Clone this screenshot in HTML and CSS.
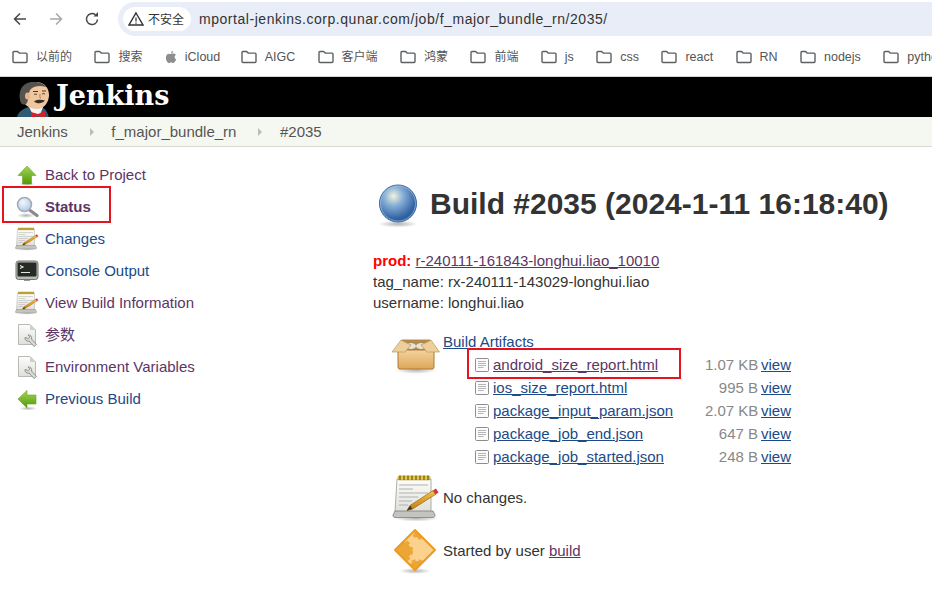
FILE: index.html
```html
<!DOCTYPE html>
<html lang="en">
<head>
  <meta charset="UTF-8">
  <title>f_major_bundle_rn #2035 - Jenkins</title>
  <link rel="stylesheet" href="styles.css">
</head>
<body>
  <!-- shared gradients and icons -->
  <svg class="sprites" aria-hidden="true">
    <defs>
      <linearGradient id="gGreen" x1="0" y1="0" x2="0" y2="1"><stop offset="0" stop-color="#a6d45a"/><stop offset="1" stop-color="#4e9a06"/></linearGradient>
      <linearGradient id="gPaper" x1="0" y1="0" x2="0" y2="1"><stop offset="0" stop-color="#fdfdfb"/><stop offset="1" stop-color="#dedeDA"/></linearGradient>
      <linearGradient id="gBox" x1="0" y1="0" x2="0" y2="1"><stop offset="0" stop-color="#f3d39c"/><stop offset="1" stop-color="#dca75a"/></linearGradient>
      <linearGradient id="gPencil" x1="0" y1="0" x2="0" y2="1"><stop offset="0" stop-color="#f2c14e"/><stop offset="1" stop-color="#c17d11"/></linearGradient>
      <radialGradient id="gBall" cx="0.38" cy="0.3" r="0.75"><stop offset="0" stop-color="#f3f3dc"/><stop offset="0.35" stop-color="#86aed6"/><stop offset="0.8" stop-color="#3465a4"/><stop offset="1" stop-color="#2a5590"/></radialGradient>
      <radialGradient id="gLens" cx="0.4" cy="0.35" r="0.7"><stop offset="0" stop-color="#f4f8fd"/><stop offset="1" stop-color="#a9c6e8"/></radialGradient>
      <radialGradient id="gShadow"><stop offset="0" stop-color="#000" stop-opacity=".3"/><stop offset="1" stop-color="#000" stop-opacity="0"/></radialGradient>
      <clipPath id="cDiamond"><path d="M23 3 43 23 23 43 3 23Z"/></clipPath>

      <symbol id="iFolder" viewBox="0 0 16 16"><path d="M1 3.500a1 1 0 0 1 1-1h3.600l1.600 1.600h6.800a1 1 0 0 1 1 1v7.400a1 1 0 0 1-1 1H2a1 1 0 0 1-1-1z" fill="none" stroke="#5c5f62" stroke-width="1.400"/></symbol>

      <symbol id="iUp" viewBox="0 0 24 24">
        <ellipse cx="12" cy="21" rx="8" ry="2" fill="url(#gShadow)"/>
        <path d="M12 3 21 12.500H16.500V21H7.500V12.500H3Z" fill="url(#gGreen)" stroke="#6aa51f" stroke-width=".6"/>
      </symbol>
      <symbol id="iLeft" viewBox="0 0 24 24">
        <ellipse cx="13" cy="21.500" rx="9" ry="2" fill="url(#gShadow)"/>
        <path d="M3 12 12 3.500V8H21V17H12V21Z" fill="url(#gGreen)" stroke="#6aa51f" stroke-width=".6"/>
      </symbol>
      <symbol id="iSearch" viewBox="0 0 24 24">
        <ellipse cx="11" cy="20.500" rx="9" ry="2.500" fill="url(#gShadow)"/>
        <path d="M14.500 15 22 20.500" stroke="#8a8a8a" stroke-width="3.200" stroke-linecap="round"/>
        <circle cx="9.500" cy="9.500" r="7" fill="url(#gLens)" stroke="#a5a9ad" stroke-width="1.500"/>
      </symbol>
      <symbol id="iNote" viewBox="0 0 48 48">
        <ellipse cx="24" cy="44.500" rx="22" ry="3" fill="url(#gShadow)"/>
        <path d="M5 5H39V38H3Z" fill="url(#gPaper)" stroke="#999995" stroke-width=".8"/>
        <path d="M3 37H41L43 41a2 2 0 0 1-2 2.500H3a2 2 0 0 1-2-2.500Z" fill="#c4c4bf" stroke="#7d7d7a" stroke-width=".8"/>
        <rect x="6" y="2" width="32" height="4" rx="1" fill="#e9c84a" stroke="#a08a20" stroke-width=".5"/>
        <path d="M8 1.500v4.500M12 1.500v4.500M16 1.500v4.500M20 1.500v4.500M24 1.500v4.500M28 1.500v4.500M32 1.500v4.500M36 1.500v4.500" stroke="#6a5a10" stroke-width="1.200"/>
        <path d="M7 11H36M7 15H21M7 19H36M7 23H26M7 27H20M7 31H16" stroke="#b0b0ac" stroke-width="1"/>
        <path d="M15 36.500 18 31.500 41 16.500 43.500 20.500 20.500 35Z" fill="url(#gPencil)" stroke="#8f5902" stroke-width=".6"/>
        <path d="M15 36.500 18 31.500 20.500 35Z" fill="#4a3a22"/>
        <path d="M41 16.500 44 14.500 46.500 18.500 43.500 20.500Z" fill="#d4323c"/>
      </symbol>
      <symbol id="iTerm" viewBox="0 0 24 24">
        <rect x="1" y="2" width="22" height="18.500" rx="2.500" fill="#b8bab5" stroke="#72756f"/>
        <rect x="2.500" y="3.500" width="19" height="14" rx="1" fill="#252a25"/>
        <path d="M5 6.500 8 8 5 9.500M6 13.500H15" stroke="#e6e8e2" stroke-width="1.200" fill="none"/>
        <rect x="9" y="21" width="6" height="1" fill="#999"/>
      </symbol>
      <symbol id="iDoc" viewBox="0 0 24 24">
        <path d="M3.500 1.500H15L20.500 7V21.500H3.500Z" fill="url(#gPaper)" stroke="#b9b9b5"/>
        <path d="M15 1.500V7H20.500Z" fill="#cfcfcb"/>
        <path d="M10 14.500a3 3 0 0 0 4 3.500l5 5.500 2.500-2-5-5.500a3 3 0 0 0-3.500-4l1.800 2-1.500 1.500z" fill="#d8d8d5" stroke="#8b8d88" stroke-width=".9"/>
      </symbol>
      <symbol id="iBall" viewBox="0 0 48 48">
        <ellipse cx="24" cy="44" rx="20" ry="3.500" fill="url(#gShadow)"/>
        <circle cx="24" cy="23.500" r="18.500" fill="url(#gBall)" stroke="#3465a4"/>
        <circle cx="24" cy="23.500" r="17.500" fill="none" stroke="#a9c4e4" stroke-opacity=".8" stroke-width=".8"/>
      </symbol>
      <symbol id="iBox" viewBox="0 0 48 48">
        <ellipse cx="24" cy="38" rx="21" ry="4" fill="url(#gShadow)"/>
        <path d="M9 8H39L36 19H12Z" fill="#b08a52"/>
        <ellipse cx="19" cy="14" rx="5" ry="3" fill="#e4e2da"/>
        <ellipse cx="29" cy="14" rx="5" ry="3" fill="#e4e2da"/>
        <path d="M6 18H42V35a2 2 0 0 1-2 2H8a2 2 0 0 1-2-2Z" fill="url(#gBox)" stroke="#ac7a32"/>
        <path d="M9 8 0 20H13L19 13Z" fill="#edcf9b" stroke="#b98a43" stroke-width=".6"/>
        <path d="M39 8 47.500 20H35L29 13Z" fill="#edcf9b" stroke="#b98a43" stroke-width=".6"/>
        <path d="M10 8H38" stroke="#b98a43"/>
      </symbol>
      <symbol id="iFile" viewBox="0 0 16 16">
        <rect x="1.500" y="1.500" width="13" height="13" rx="1" fill="#fbfbfb" stroke="#8d8d8d"/>
        <path d="M4 4.500H12M4 6.500H12M4 8.500H12M4 10.500H9.500" stroke="#b5b5b5"/>
      </symbol>
      <symbol id="iCause" viewBox="0 0 48 48">
        <ellipse cx="23" cy="44" rx="16" ry="3" fill="url(#gShadow)"/>
        <path d="M23 3 43 23 23 43 3 23Z" fill="#fad18d"/>
        <g clip-path="url(#cDiamond)" fill="#eca636" stroke="#eca636">
          <circle cx="9" cy="24" r="10" stroke-width="4" stroke-dasharray="3.500 3"/>
          <circle cx="25" cy="42" r="8" stroke-width="4" stroke-dasharray="3.500 3"/>
          <circle cx="27" cy="6" r="5" stroke-width="3" stroke-dasharray="3 2.500"/>
        </g>
        <path d="M23 3 43 23 23 43 3 23Z" fill="none" stroke="#ec9a22" stroke-width="2" stroke-linejoin="round"/>
      </symbol>
    </defs>
  </svg>

  <div class="toolbar">
    <svg class="nav-icon" viewBox="0 0 16 16"><path d="M14 8H2.500M8 2.500 2.500 8 8 13.500" fill="none" stroke="#474747" stroke-width="1.500"/></svg>
    <svg class="nav-icon" viewBox="0 0 16 16"><path d="M2 8H13.500M8 2.500 13.500 8 8 13.500" fill="none" stroke="#a8a8a8" stroke-width="1.500"/></svg>
    <svg class="nav-icon" viewBox="0 0 16 16"><path d="M13.500 8.500A5.500 5.500 0 1 1 11.500 3.800" fill="none" stroke="#474747" stroke-width="1.500"/><path d="M9.500 5.500H14V1Z" fill="#474747"/></svg>
    <div class="omnibox">
      <span class="chip">
        <svg class="warn" viewBox="0 0 16 16"><path d="M8 2 15 14H1Z" fill="none" stroke="#333" stroke-width="1.400"/><path d="M8 6.500V10.500M8 11.500V12.800" stroke="#333" stroke-width="1.200"/></svg>
        不安全
      </span>
      <span class="url">mportal-jenkins.corp.qunar.com/job/f_major_bundle_rn/2035/</span>
    </div>
  </div>

  <div class="bookmarks">
    <span class="bm cjk"><svg class="bm-icon"><use href="#iFolder"/></svg>以前的</span>
    <span class="bm cjk"><svg class="bm-icon"><use href="#iFolder"/></svg>搜索</span>
    <span class="bm bm-apple"><svg class="apple" viewBox="0 0 14 16"><path d="M9.500 1C9.600 2.500 8.400 3.800 7 3.800 6.900 2.400 8.200 1.100 9.500 1ZM7 4.600C7.800 4.600 8.600 4 9.800 4 11 4 12 4.600 12.600 5.600 10.600 6.800 10.900 9.800 13 10.700 12.400 12.400 11 15 9.600 15 8.700 15 8.200 14.400 7.100 14.400 6 14.400 5.400 15 4.600 15 3 15 1 11.600 1 8.800 1 6 2.800 4.100 4.600 4.100 5.600 4.100 6.300 4.600 7 4.600Z" fill="#8e8e8e"/></svg>iCloud</span>
    <span class="bm"><svg class="bm-icon"><use href="#iFolder"/></svg>AIGC</span>
    <span class="bm cjk"><svg class="bm-icon"><use href="#iFolder"/></svg>客户端</span>
    <span class="bm cjk"><svg class="bm-icon"><use href="#iFolder"/></svg>鸿蒙</span>
    <span class="bm cjk"><svg class="bm-icon"><use href="#iFolder"/></svg>前端</span>
    <span class="bm"><svg class="bm-icon"><use href="#iFolder"/></svg>js</span>
    <span class="bm"><svg class="bm-icon"><use href="#iFolder"/></svg>css</span>
    <span class="bm"><svg class="bm-icon"><use href="#iFolder"/></svg>react</span>
    <span class="bm"><svg class="bm-icon"><use href="#iFolder"/></svg>RN</span>
    <span class="bm"><svg class="bm-icon"><use href="#iFolder"/></svg>nodejs</span>
    <span class="bm"><svg class="bm-icon"><use href="#iFolder"/></svg>python</span>
  </div>

  <header class="jenkins-head">
    <svg class="butler" viewBox="0 0 36 38">
      <path d="M1 38C2 31 8 29 12 27H26C30 29 32 33 33 38Z" fill="#2f5a75"/>
      <path d="M13 27H27L24 35H17Z" fill="#f4f4f4"/>
      <path d="M15 32 22 34 29 31V38L22 36 15 38Z" fill="#d8202a"/>
      <path d="M6 16C6 7 12 2 20 2 28 2 33 8 33 15 33 22 28 29 21 29 13 29 6 24 6 16Z" fill="#efc6a0"/>
      <path d="M5 23C1 12 6 1.500 18 2 24 2 28 4 30 7 24 5 17 6 14 10 12 14 13 18 11 23 9 25 7 25 5 23Z" fill="#55534e"/>
      <ellipse cx="11.500" cy="16" rx="2.500" ry="3.500" fill="#e6b48c"/>
      <path d="M17 11.500H22M26 11H30M18 14.500C19 14 20 14 21 14.500M26 14C27 13.500 28 13.500 29 14" stroke="#3b2b20" fill="none" stroke-width=".9"/>
      <path d="M24 14C24 17 23.500 18 25 18.500" stroke="#b27f58" fill="none"/>
      <path d="M18 21.500C20 19.500 25 19.500 29 20.500 26 24 21 24 18 21.500Z" fill="#3b2b20"/>
    </svg>
    <span class="wordmark">Jenkins</span>
  </header>

  <nav class="crumbs">
    <span>Jenkins</span><i class="sep"></i>
    <span>f_major_bundle_rn</span><i class="sep"></i>
    <span>#2035</span>
  </nav>

  <div class="page">
    <aside class="side">
      <a class="task visited"><svg class="ic24"><use href="#iUp"/></svg>Back to Project</a>
      <a class="task visited current"><svg class="ic24"><use href="#iSearch"/></svg>Status</a>
      <a class="task"><svg class="ic24"><use href="#iNote"/></svg>Changes</a>
      <a class="task"><svg class="ic24"><use href="#iTerm"/></svg>Console Output</a>
      <a class="task visited"><svg class="ic24"><use href="#iNote"/></svg>View Build Information</a>
      <a class="task visited"><svg class="ic24"><use href="#iDoc"/></svg>参数</a>
      <a class="task visited"><svg class="ic24"><use href="#iDoc"/></svg>Environment Variables</a>
      <a class="task"><svg class="ic24"><use href="#iLeft"/></svg>Previous Build</a>
    </aside>

    <main class="main">
      <h1 class="title"><svg class="ic48"><use href="#iBall"/></svg>Build #2035 (2024-1-11 16:18:40)</h1>

      <div class="desc">
        <div><b class="prod">prod:</b> <a class="link visited">r-240111-161843-longhui.liao_10010</a></div>
        <div>tag_name: rx-240111-143029-longhui.liao</div>
        <div>username: longhui.liao</div>
      </div>

      <section class="artifacts">
        <svg class="ic48"><use href="#iBox"/></svg>
        <div class="artifacts-body">
          <a class="link artifacts-title">Build Artifacts</a>
          <div class="files">
            <div class="file hl"><svg class="ic16"><use href="#iFile"/></svg><a class="link visited">android_size_report.html</a></div><span class="size">1.07 KB</span><a class="link">view</a>
            <div class="file"><svg class="ic16"><use href="#iFile"/></svg><a class="link">ios_size_report.html</a></div><span class="size">995 B</span><a class="link">view</a>
            <div class="file"><svg class="ic16"><use href="#iFile"/></svg><a class="link">package_input_param.json</a></div><span class="size">2.07 KB</span><a class="link">view</a>
            <div class="file"><svg class="ic16"><use href="#iFile"/></svg><a class="link">package_job_end.json</a></div><span class="size">647 B</span><a class="link">view</a>
            <div class="file"><svg class="ic16"><use href="#iFile"/></svg><a class="link">package_job_started.json</a></div><span class="size">248 B</span><a class="link">view</a>
          </div>
        </div>
      </section>

      <div class="line"><svg class="ic48"><use href="#iNote"/></svg>No changes.</div>
      <div class="line"><svg class="ic48"><use href="#iCause"/></svg><span>Started by user <a class="link visited">build</a></span></div>
    </main>
  </div>
</body>
</html>
```

FILE: styles.css
```css
*, *::after {
  box-sizing: border-box;
}

html, body {
  height: 100%;
  overflow: hidden;
}

body {
  margin: 0;
  font-family: "Liberation Sans", Arial, "Noto Sans CJK SC", sans-serif;
  font-size: 15px;
  line-height: 20px;
  color: #333;
  background: #fff;
}

.sprites {
  position: absolute;
  width: 0;
  height: 0;
}

/* browser chrome */
.toolbar {
  height: 38px;
  display: flex;
  align-items: center;
  padding-left: 12px;
  gap: 20px;
}

.nav-icon {
  width: 16px;
  height: 16px;
  flex: none;
}

.omnibox {
  flex: 1;
  height: 34px;
  margin-left: -2px;
  margin-right: -40px;
  border-radius: 17px;
  background: #e9edf7;
  display: flex;
  align-items: center;
  padding-left: 5px;
  gap: 8px;
}

.chip {
  height: 24px;
  width: 68px;
  border-radius: 12px;
  background: #fff;
  display: flex;
  align-items: center;
  gap: 4px;
  padding-left: 5px;
  font-size: 12px;
  font-family: "Noto Sans CJK SC", sans-serif;
  color: #333;
}

.warn {
  width: 16px;
  height: 16px;
}

.url {
  font-size: 14px;
  letter-spacing: 0.54px;
  color: #333;
}

.bookmarks {
  height: 39px;
  padding: 0 0 1px 12px;
  display: flex;
  align-items: center;
  gap: 22.4px;
  border-bottom: 1px solid #d4d4d4;
  overflow: hidden;
  white-space: nowrap;
  font-size: 12.5px;
  color: #555;
}

.bm {
  display: flex;
  align-items: center;
  gap: 8px;
  flex: none;
}

.bm-apple {
  margin-right: -2px;
}

.cjk {
  font-size: 12px;
}

.bm-icon {
  width: 16px;
  height: 16px;
}

.apple {
  width: 12px;
  height: 14px;
}

/* jenkins header */
.jenkins-head {
  height: 40px;
  background: #000;
  display: flex;
  align-items: flex-start;
  padding-left: 16px;
  overflow: hidden;
}

.butler {
  width: 36px;
  height: 38px;
  margin-top: 3px;
  flex: none;
}

.wordmark {
  margin-left: 4px;
  font-family: "DejaVu Serif", "Liberation Serif", serif;
  font-weight: bold;
  font-size: 27px;
  line-height: 38px;
  color: #fff;
}

.crumbs {
  height: 30px;
  background: #f5f8f1;
  border-bottom: 1px solid #d8dad4;
  display: flex;
  align-items: center;
  padding-left: 17px;
  gap: 22px;
  color: #555;
}

.sep {
  width: 0;
  height: 0;
  margin-right: -4.5px;
  border-left: 4px solid #bbb;
  border-top: 4px solid transparent;
  border-bottom: 4px solid transparent;
}

/* page */
.page {
  display: flex;
}

.side {
  width: 373px;
  flex: none;
  padding-top: 12px;
}

.task {
  position: relative;
  height: 32px;
  display: flex;
  align-items: center;
  gap: 6px;
  padding-left: 15px;
  color: #204a87;
}

.task.visited,
.link.visited {
  color: #5c3566;
}

.current {
  font-weight: bold;
}

.current::after {
  content: "";
  position: absolute;
  left: 2px;
  top: -5px;
  width: 109px;
  height: 37px;
  border: 2px solid #e8121f;
}

.ic24 {
  width: 24px;
  height: 24px;
  flex: none;
}

.ic48 {
  width: 48px;
  height: 48px;
  flex: none;
}

.ic16 {
  width: 16px;
  height: 16px;
  flex: none;
}

.main {
  flex: 1;
  padding-top: 33px;
}

.title {
  margin: 0 0 22px 1px;
  display: flex;
  align-items: center;
  gap: 8px;
  font-size: 30px;
  line-height: 48px;
  color: #333;
  white-space: nowrap;
}

.desc {
  line-height: 21px;
}

.prod {
  color: #f00;
}

.link {
  color: #204a87;
  text-decoration: underline;
}

.artifacts {
  margin: 19px 0 6px 19px;
  display: flex;
  gap: 3px;
}

.artifacts-body {
  flex: 1;
}

.artifacts-title {
  display: block;
  line-height: 20px;
  margin-bottom: 1px;
}

.files {
  display: grid;
  grid-template-columns: 228px 53px auto;
  column-gap: 3px;
  justify-content: start;
  margin-left: 31px;
  grid-auto-rows: 23px;
  align-items: center;
}

.file {
  position: relative;
  display: flex;
  align-items: center;
  gap: 3px;
}

.hl::after {
  content: "";
  position: absolute;
  left: -7px;
  top: -7px;
  width: 214px;
  height: 31px;
  border: 2px solid #e8121f;
}

.size {
  color: #888;
  text-align: right;
  white-space: nowrap;
}

.line {
  margin: 0 0 5px 19px;
  display: flex;
  align-items: center;
  gap: 3px;
}
```
